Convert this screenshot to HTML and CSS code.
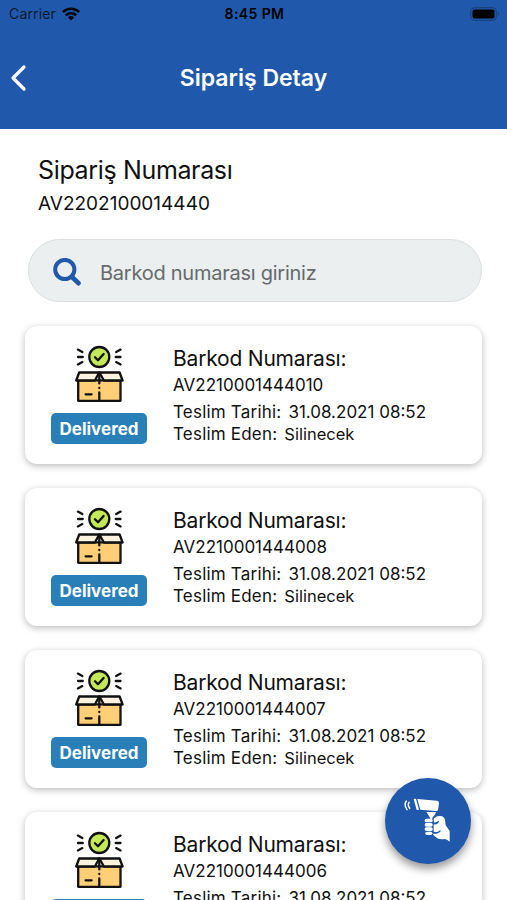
FILE: index.html
```html
<!DOCTYPE html>
<html lang="tr">
<head>
    <meta charset="UTF-8">
    <meta name="viewport" content="width=device-width, initial-scale=1.0">
    <title>Sipariş Detay</title>
    <link rel="stylesheet" href="styles.css">
</head>
<body>
    <svg class="sprite" width="0" height="0">
        <symbol id="box" viewBox="0 0 51 58">
            <g stroke="#111" stroke-width="2.3" stroke-linecap="round" stroke-linejoin="round" fill="none">
                <circle cx="25.3" cy="12" r="10" fill="#c5e858"/>
                <path d="M21 12.3l3 3 5.6-6.3"/>
                <path d="M3.9 4.6l4.4 2.5M4 12h4.8M3.9 19.4l4.4-2.3M42.2 7.1l4.4-2.5M41.7 12h4.8M42.2 17.1l4.4 2.3"/>
                <path d="M4.2 35.3h42.3v20.5H4.2z" fill="#ffcf78"/>
                <path d="M5.2 27.5h20l-4.3 8H2.2z" fill="#fbf3df"/>
                <path d="M25.4 27.5h20.2l3 8H29.9z" fill="#fbf3df"/>
                <path d="M25.3 27.6v10.8M25.3 42.9v.2M25.3 47.5v8M11.6 49.3h6"/>
            </g>
        </symbol>
    </svg>

    <header class="header">
        <div class="status">
            <span class="carrier">Carrier
                <svg width="18" height="14" viewBox="0 0 18 14" fill="none" stroke="#000" stroke-width="2.5">
                    <path d="M.9 5.1a11.5 11.5 0 0 1 16.2 0"/>
                    <path d="M3.8 8.3a7.4 7.4 0 0 1 10.4 0"/>
                    <path d="M9 13.5L5.9 10.4a4.4 4.4 0 0 1 6.2 0z" fill="#000" stroke="none"/>
                </svg>
            </span>
            <span class="clock">8:45 PM</span>
            <svg class="battery" width="30" height="14" viewBox="0 0 30 14">
                <rect x=".7" y=".7" width="25.6" height="12.6" rx="4" fill="none" stroke="#18427f" stroke-width="1.2"/>
                <rect x="2.5" y="2.5" width="22" height="9" rx="2"/>
                <path d="M27.8 5v4q1.5-.6 1.5-2t-1.5-2z" fill="#18427f"/>
            </svg>
        </div>
        <div class="navbar">
            <svg class="back" width="18" height="28" viewBox="0 0 18 28" fill="none" stroke="#fff" stroke-width="3.2" stroke-linecap="round" stroke-linejoin="round">
                <path d="M15 3L4 14l11 11"/>
            </svg>
            <h1>Sipariş Detay</h1>
        </div>
    </header>

    <main class="content">
        <section class="order">
            <h2>Sipariş Numarası</h2>
            <p>AV2202100014440</p>
        </section>

        <label class="search">
            <svg width="29" height="29" viewBox="0 0 29 29" fill="none" stroke="#2059ab" stroke-width="4" stroke-linecap="round">
                <circle cx="11.8" cy="11.5" r="9.6"/>
                <path d="M19 19l6.6 6.2" stroke-width="4.6"/>
            </svg>
            <span>Barkod numarası giriniz</span>
        </label>

        <div class="list">
            <article class="card">
                <div class="state">
                    <svg width="51" height="58"><use href="#box"/></svg>
                    <span class="badge">Delivered</span>
                </div>
                <div class="info">
                    <h3>Barkod Numarası:</h3>
                    <p class="code">AV2210001444010</p>
                    <p class="row">Teslim Tarihi: <span class="date">31.08.2021 08:52</span></p>
                    <p class="row">Teslim Eden: <span class="name">Silinecek</span></p>
                </div>
            </article>
            <article class="card">
                <div class="state">
                    <svg width="51" height="58"><use href="#box"/></svg>
                    <span class="badge">Delivered</span>
                </div>
                <div class="info">
                    <h3>Barkod Numarası:</h3>
                    <p class="code">AV2210001444008</p>
                    <p class="row">Teslim Tarihi: <span class="date">31.08.2021 08:52</span></p>
                    <p class="row">Teslim Eden: <span class="name">Silinecek</span></p>
                </div>
            </article>
            <article class="card">
                <div class="state">
                    <svg width="51" height="58"><use href="#box"/></svg>
                    <span class="badge">Delivered</span>
                </div>
                <div class="info">
                    <h3>Barkod Numarası:</h3>
                    <p class="code">AV2210001444007</p>
                    <p class="row">Teslim Tarihi: <span class="date">31.08.2021 08:52</span></p>
                    <p class="row">Teslim Eden: <span class="name">Silinecek</span></p>
                </div>
            </article>
            <article class="card">
                <div class="state">
                    <svg width="51" height="58"><use href="#box"/></svg>
                    <span class="badge">Delivered</span>
                </div>
                <div class="info">
                    <h3>Barkod Numarası:</h3>
                    <p class="code">AV2210001444006</p>
                    <p class="row">Teslim Tarihi: <span class="date">31.08.2021 08:52</span></p>
                    <p class="row">Teslim Eden: <span class="name">Silinecek</span></p>
                </div>
            </article>
        </div>
    </main>

    <button class="scan" aria-label="Barkod okut">
        <svg width="50" height="50" viewBox="0 0 150 150" fill="#fff">
            <path d="M10 18q-8 12 2 26M18 22q-5 9 2 18" fill="none" stroke="#fff" stroke-width="4.5" stroke-linecap="round"/>
            <path d="M32 12l7-1 9 33-7 1z"/>
            <path d="M43 12l59 5q7 2 6 9l-3 18q-1 5-6 4l-47-4z"/>
            <path d="M70 51h29q-1 7-7 12-5 5-5 11l-3 2q-3-10-14-25z"/>
            <rect x="65" y="71" width="24" height="11" rx="5"/>
            <rect x="65" y="84" width="24" height="11" rx="5"/>
            <rect x="65" y="97" width="24" height="11" rx="5"/>
            <rect x="67" y="110" width="21" height="10" rx="5"/>
            <path d="M92 72q7-10 20-9 12 1 14 12l2 16 12 17v32q-8-8-15-8-19 3-28-7-6-5-8-9h11q9-1 14-8l-3-2q-5 6-11 5l-8-1V88q13 2 17-9l-4-1q-3 5-12 4z"/>
        </svg>
    </button>
</body>
</html>
```
FILE: styles.css
```css
* {
    box-sizing: border-box;
}
body {
    margin: 0;
    height: 900px;
    overflow: hidden;
    background-color: #fff;
    color: #111;
    font-family: Inter, "Liberation Sans", sans-serif;
}
h1, h2, h3, p {
    margin: 0;
    font-weight: 400;
    white-space: nowrap;
}
.sprite {
    position: absolute;
}
.header {
    height: 129px;
    background-color: #2059ab;
}
.status {
    display: grid;
    grid-template-columns: 1fr auto 1fr;
    align-items: center;
    height: 27px;
    padding: 0 7px 0 9px;
    color: #000;
    font-size: 14px;
}
.carrier {
    display: flex;
    align-items: center;
    gap: 6px;
    color: #0a1a33;
    letter-spacing: 0.15px;
}
.clock {
    font-weight: 600;
    letter-spacing: 0.4px;
}
.battery {
    justify-self: end;
}
.navbar {
    display: grid;
    grid-template-columns: 40px 1fr 40px;
    align-items: center;
    height: 101px;
    padding: 0 9px 0 9px;
}
.navbar h1 {
    color: #fff;
    font-size: 23px;
    font-weight: 600;
    text-align: center;
}
.content {
    padding: 0 25px;
}
.order {
    padding: 25px 13px 0;
}
.order h2 {
    font-size: 25px;
    line-height: 32px;
    letter-spacing: -0.35px;
}
.order p {
    margin-top: 6px;
    font-size: 19px;
    line-height: 24px;
}
.search {
    display: flex;
    align-items: center;
    gap: 18px;
    height: 63px;
    margin: 23px 0 24px 3px;
    padding: 4px 0 0 24px;
    border: 1px solid #dcdfe0;
    border-radius: 32px;
    background-color: #ebeff0;
    color: #666a6b;
    font-size: 20px;
    letter-spacing: -0.25px;
}
.list {
    display: flex;
    flex-direction: column;
    gap: 24px;
}
.card {
    display: flex;
    height: 138px;
    border-radius: 12px;
    background-color: #fff;
    box-shadow: 0 2px 7px rgba(0, 0, 0, 0.27);
}
.state {
    display: flex;
    flex-direction: column;
    align-items: center;
    width: 148px;
    padding-top: 19px;
}
.badge {
    width: 96px;
    height: 31px;
    margin-top: 10px;
    border-radius: 5px;
    background-color: #2980b9;
    color: #fff;
    font-size: 17px;
    font-weight: 700;
    line-height: 32px;
    text-align: center;
}
.info {
    padding-top: 18px;
}
.info h3 {
    font-size: 21px;
    line-height: 29px;
    letter-spacing: -0.2px;
}
.code {
    font-size: 17px;
    line-height: 24px;
}
.row {
    display: flex;
    gap: 7px;
    font-size: 17px;
    line-height: 23px;
    letter-spacing: 0.2px;
}
.code + .row {
    margin-top: 4px;
    line-height: 22px;
}
.date {
    font-size: 17px;
    letter-spacing: 0;
}
.name {
    font-size: 16.5px;
    line-height: 22px;
    letter-spacing: 0;
}
.scan {
    position: absolute;
    top: 778px;
    left: 385px;
    width: 86px;
    height: 86px;
    padding: 0;
    border: none;
    border-radius: 50%;
    background-color: #2059ab;
    box-shadow: 0 5px 9px rgba(0, 0, 0, 0.4);
}
```
